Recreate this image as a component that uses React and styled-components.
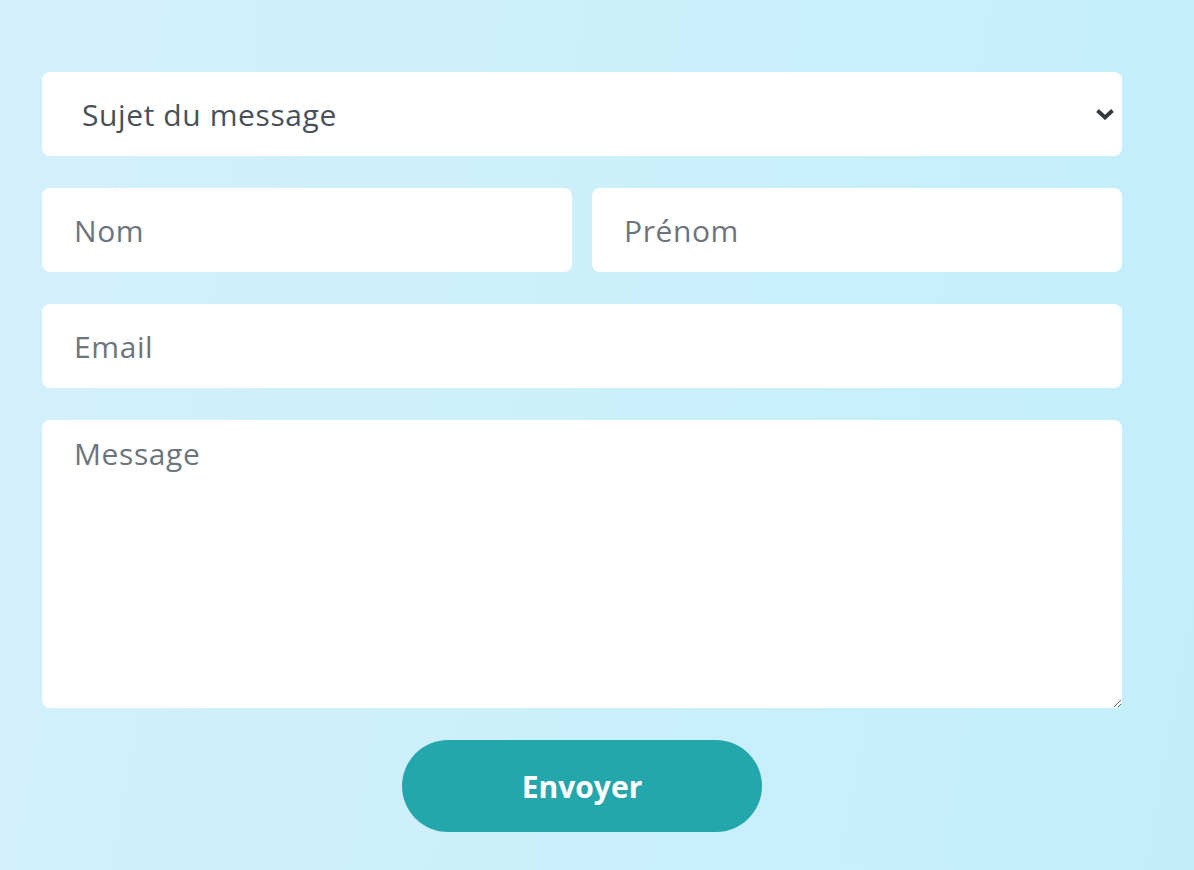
import React from 'react';
import styled, { createGlobalStyle } from 'styled-components';

const GlobalStyle = createGlobalStyle`
    html, body {
        margin: 0;
        padding: 0;
    }

    body {
        min-height: 870px;
        background: linear-gradient(100deg, #d4effc 0%, #cdeffc 45%, #c2eefc 100%);
        font-family: 'Open Sans', 'Noto Sans', sans-serif;
    }
`;

const App = () => {
    return (
        <>
            <GlobalStyle />
            <Page>
                <Form onSubmit={e => e.preventDefault()}>
                    <SelectWrap>
                        <Select defaultValue=''>
                            <option value='' disabled>Sujet du message</option>
                            <option value='info'>Demande d'information</option>
                            <option value='other'>Autre</option>
                        </Select>
                        <Chevron viewBox='0 0 20 12' aria-hidden='true'>
                            <path d='M2.5 2.5 L10 9.5 L17.5 2.5' />
                        </Chevron>
                    </SelectWrap>
                    <Row>
                        <Field type='text' placeholder='Nom' />
                        <Field type='text' placeholder='Prénom' />
                    </Row>
                    <Field type='email' placeholder='Email' />
                    <TextArea placeholder='Message' />
                    <SubmitButton type='submit'>Envoyer</SubmitButton>
                </Form>
            </Page>
        </>
    );
};

export default App;

const Page = styled.div`
    box-sizing: border-box;
    padding: 72px 42px 38px;
    width: 1164px;
`;

const Form = styled.form`
    display: flex;
    flex-direction: column;
    gap: 32px;
    width: 1080px;
`;

const Row = styled.div`
    display: grid;
    grid-template-columns: 1fr 1fr;
    column-gap: 20px;
`;

const baseField = `
    box-sizing: border-box;
    width: 100%;
    border: none;
    outline: none;
    border-radius: 8px;
    background-color: #ffffff;
    font-family: 'Open Sans', 'Noto Sans', sans-serif;
    font-size: 30px;
    letter-spacing: 0.6px;
    color: #495057;

    &::placeholder {
        color: #6c757d;
        opacity: 1;
    }
`;

const Field = styled.input`
    ${baseField}
    height: 84px;
    padding: 0 32px;
`;

const SelectWrap = styled.div`
    position: relative;
`;

const Select = styled.select`
    ${baseField}
    appearance: none;
    height: 84px;
    padding: 0 40px;
    color: #495057;
`;

const Chevron = styled.svg`
    position: absolute;
    right: 7px;
    top: 36px;
    width: 20px;
    height: 12px;
    fill: none;
    stroke: #343a40;
    stroke-width: 3.8;
    pointer-events: none;
`;

const TextArea = styled.textarea`
    ${baseField}
    height: 288px;
    padding: 13px 32px;
    resize: vertical;
    line-height: 1.4;
`;

const SubmitButton = styled.button`
    align-self: center;
    width: 360px;
    height: 92px;
    border: none;
    border-radius: 46px;
    background-color: #24a6ad;
    color: #ffffff;
    font-family: 'Open Sans', 'Noto Sans', sans-serif;
    font-size: 30px;
    font-weight: 700;
    cursor: pointer;
`;
